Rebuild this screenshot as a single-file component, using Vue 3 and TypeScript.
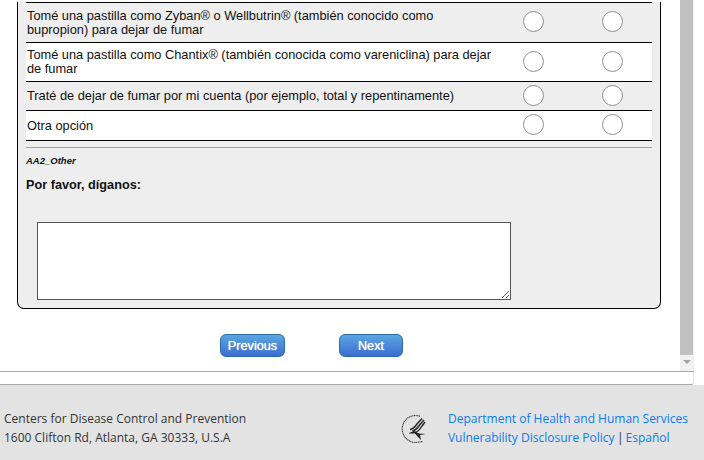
<script setup lang="ts">
const rows: string[] = [
  'Tomé una pastilla como Zyban® o Wellbutrin® (también conocido como bupropion) para dejar de fumar',
  'Tomé una pastilla como Chantix® (también conocida como vareniclina) para dejar de fumar',
  'Traté de dejar de fumar por mi cuenta (por ejemplo, total y repentinamente)',
  'Otra opción',
]
</script>

<template>
  <div class="page">
    <div class="frame">
      <main class="content">
        <section class="panel">
          <div class="options">
            <div v-for="(r, i) in rows" :key="i" class="row" :class="'row' + i">
              <div class="label">{{ r }}</div>
              <div class="cell"><span class="radio"></span></div>
              <div class="cell"><span class="radio"></span></div>
            </div>
          </div>
          <hr class="rule" />
          <div class="code">AA2_Other</div>
          <div class="question">Por favor, díganos:</div>
          <textarea class="answer"></textarea>
        </section>
        <nav class="buttons">
          <button class="btn prev">Previous</button>
          <button class="btn next">Next</button>
        </nav>
      </main>
      <div class="scrollbar">
        <div class="thumb"></div>
        <div class="arrow"></div>
      </div>
    </div>
    <div class="strip"></div>
    <footer class="footer">
      <div class="address">
        <div>Centers for Disease Control and Prevention</div>
        <div>1600 Clifton Rd, Atlanta, GA 30333, U.S.A</div>
      </div>
      <div class="right">
        <svg class="logo" width="30" height="30" viewBox="0 0 30 30" fill="none">
          <path d="M20 2.2A13.5 13.5 0 1 0 16 28.5" stroke="#444" stroke-width="1.2" stroke-dasharray="1.2 .5" />
          <path d="M16 28.5l7-1" stroke="#444" stroke-width="1.1" stroke-dasharray="1.2 .5" />
          <path d="M10 15.5c3-.5 5-2.5 7-5.5l5-5.5" stroke="#222" stroke-width="1.4" />
          <path d="M12.5 17c3.500-.8 5.500-3.500 7.500-6.500l4-4.500" stroke="#222" stroke-width="1.4" />
          <path d="M15 18.500c3.500-1 5.500-4 7-6.500l3-4" stroke="#222" stroke-width="1.4" />
          <path d="M9 19l5-2 5 2.500 7 .5-6 1 1 5-3-3-3-3.500-6 0z" fill="#222" />
        </svg>
        <div class="links">
          <div><a>Department of Health and Human Services</a></div>
          <div><a>Vulnerability Disclosure Policy</a><span class="sep"> | </span><a>Español</a></div>
        </div>
      </div>
    </footer>
  </div>
</template>

<style>
html, body { margin: 0; background: #fff; }
</style>

<style scoped>
.page {
  width: 704px;
  height: 460px;
  overflow: hidden;
  display: flex;
  flex-direction: column;
  background: #fff;
  font-family: "Liberation Sans", Arial, sans-serif;
}
.frame {
  height: 372px;
  width: 694px;
  box-sizing: border-box;
  display: flex;
  border-bottom: 1px solid #a8a8a8;
}
.content { flex: 1; min-width: 0; padding-top: 2px; }
.panel {
  box-sizing: border-box;
  width: 644px;
  height: 307px;
  margin-left: 17px;
  padding: 0 8px 0 8px;
  background: #eee;
  border: 1px solid #000;
  border-top: 0;
  border-radius: 0 0 7px 7px;
}
.options { border-top: 1px solid #000; }
.row {
  display: grid;
  grid-template-columns: 1fr 79px 79px;
  align-items: center;
  border-bottom: 1px solid #000;
  box-sizing: border-box;
  color: #111;
  font-size: 12.8px;
  line-height: 14px;
}
.row0 { height: 40px; background: #eee; }
.row1 { height: 39px; background: #fff; }
.row2 { height: 29px; background: #eee; }
.row3 { height: 30px; background: #fff; }
.label { padding-left: 1px; }
.cell { display: flex; justify-content: center; }
.radio {
  display: block;
  box-sizing: border-box;
  width: 21px;
  height: 21px;
  margin-bottom: 2px;
  border-radius: 50%;
  border: 1px solid #8f8f8f;
  background: #fff;
}
.rule { margin: 6px 0 0; border: 0; border-top: 1px solid #a3a3a3; height: 1px; }
.code {
  margin-top: 6px;
  font-size: 9.5px;
  line-height: 11px;
  font-weight: bold;
  font-style: italic;
  color: #111;
}
.question {
  margin-top: 11px;
  font-size: 12.7px;
  line-height: 16px;
  font-weight: bold;
  color: #111;
}
.answer {
  display: block;
  box-sizing: border-box;
  width: 474px;
  height: 78px;
  margin: 29px 0 0 11px;
  padding: 2px;
  border: 1px solid #555;
  border-radius: 0;
  background: #fff;
  outline: none;
}
.buttons {
  display: flex;
  gap: 54px;
  margin: 25px 0 0 220px;
}
.btn {
  box-sizing: border-box;
  height: 23px;
  padding: 1px 0 0;
  border: 1px solid #2b6ca3;
  border-radius: 6px;
  background: linear-gradient(#5aa6e2, #3c6dd2);
  color: #fff;
  font-family: "Liberation Sans", Arial, sans-serif;
  font-size: 12.7px;
  text-shadow: 0 0 1px #fff;
  line-height: 20px;
}
.prev { width: 65px; }
.next { width: 64px; }
.scrollbar {
  width: 14px;
  flex: none;
  display: flex;
  flex-direction: column;
  background: #f1f1f1;
}
.thumb { height: 355px; width: 13px; background: #c1c1c1; }
.arrow {
  width: 0;
  height: 0;
  margin: 5px 0 0 3px;
  border-left: 4px solid transparent;
  border-right: 4px solid transparent;
  border-top: 4px solid #a3a3a3;
}
.strip {
  height: 13px;
  width: 694px;
  box-sizing: border-box;
  border-bottom: 1px solid #a8a8a8;
  border-right: 1px solid #e4e4e4;
  border-bottom-right-radius: 3px;
  flex: none;
}
.footer {
  flex: 1;
  display: flex;
  justify-content: space-between;
  background: #e3e3e3;
  padding: 24px 16px 0 4px;
  font-family: "Open Sans", sans-serif;
  font-size: 12px;
  line-height: 19px;
  color: #333;
}
.right { display: flex; align-items: flex-start; gap: 18px; }
.logo { margin-top: 5px; }
.links a { color: #0a7cf5; }
.sep { letter-spacing: -0.6px; }
</style>
